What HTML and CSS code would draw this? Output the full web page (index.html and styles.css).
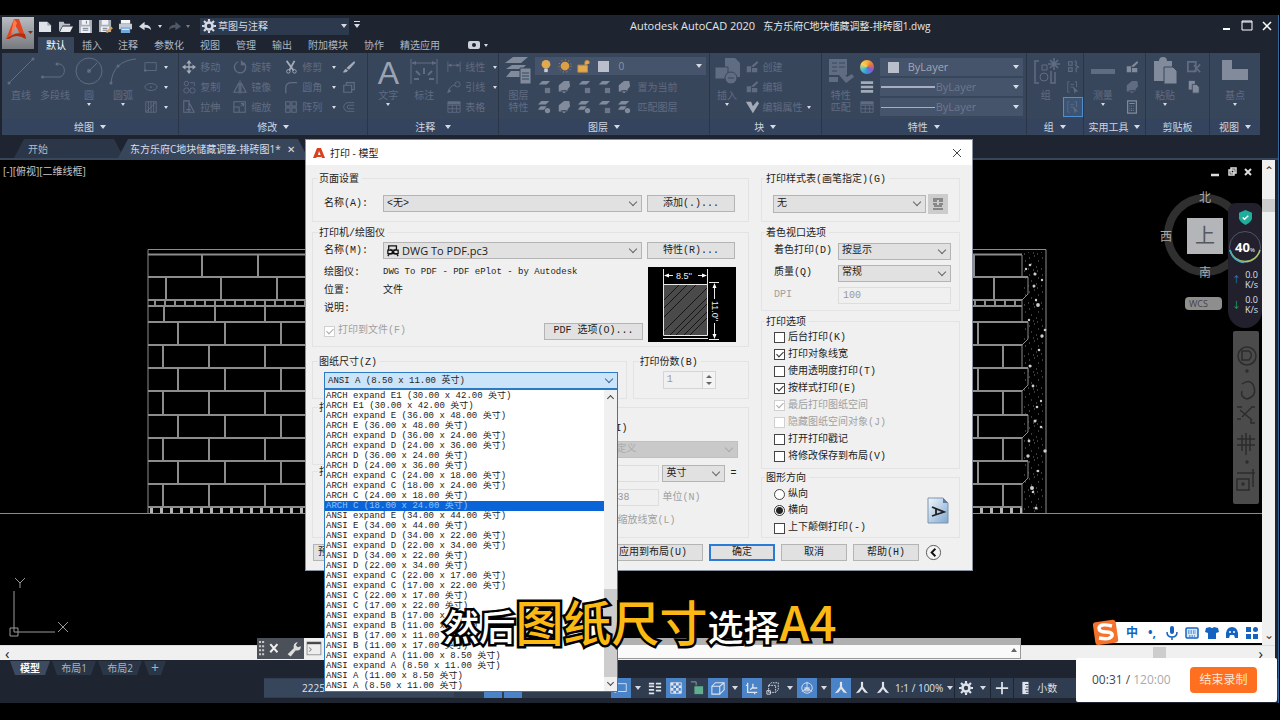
FILE: index.html
```html
<!DOCTYPE html>
<html lang="zh-CN">
<head>
<meta charset="utf-8">
<title>Autodesk AutoCAD 2020</title>
<link rel="stylesheet" href="styles.css">
</head>
<body>
<svg class="defs" aria-hidden="true">
  <symbol id="new" viewBox="0 0 16 14"><path d="M1 2h9l4 4v7H1z" fill="#dfe3ea"/><path d="M10 2v4h4" fill="#9aa3b2"/></symbol>
  <symbol id="open" viewBox="0 0 16 14"><path d="M1 13V2h5l1 2h6v2H5z" fill="#b9c0cc"/><path d="M5 7h11l-3 6H2z" fill="#e6e9ee"/></symbol>
  <symbol id="save" viewBox="0 0 16 14"><path d="M1 0h14v14H1z" fill="#a8afbb"/><path d="M4 0h8v5H4zM3 7h10v7H3z" fill="#eef0f3"/><path d="M5 9h6M5 11h6M9 1v3" stroke="#6b7484"/></symbol>
  <symbol id="saveas" viewBox="0 0 16 14"><path d="M1 0h13v13H1z" fill="#a8afbb"/><path d="M4 0h7v5H4zM3 7h9v6H3z" fill="#eef0f3"/><path d="M5 9h5M5 11h5" stroke="#6b7484"/><path d="M8 13l6-6 2 2-6 5z" fill="#e3a14c"/></symbol>
  <symbol id="print" viewBox="0 0 16 14"><path d="M3 0h10v4H3z" fill="#f4f6f8"/><path d="M1 4h14v6H1z" fill="#c3cad5"/><path d="M3 8h10v6H3z" fill="#6ea8dc"/><path d="M4 10h8" stroke="#fff"/></symbol>
  <symbol id="undo" viewBox="0 0 16 14"><path d="M1 7l6-5v3q7 0 7 6q-2-3-7-3v3z" fill="currentColor"/></symbol>
  <symbol id="gear" viewBox="0 0 16 16"><circle cx="8" cy="8" r="4" fill="none" stroke="currentColor" stroke-width="3"/><path d="M8 0v3M8 13v3M0 8h3M13 8h3M2.300 2.300l2 2M11.700 11.700l2 2M13.700 2.300l-2 2M4.300 11.700l-2 2" stroke="currentColor" stroke-width="2.500"/></symbol>
  <symbol id="line" viewBox="0 0 28 28"><path d="M2 26L26 2" stroke="currentColor" fill="none"/><circle cx="2" cy="26" r="1.500" fill="currentColor"/><circle cx="26" cy="2" r="1.500" fill="currentColor"/></symbol>
  <symbol id="pline" viewBox="0 0 28 28"><path d="M1 20h18a7 7 0 000-13h-4" stroke="currentColor" fill="none"/><circle cx="1.500" cy="20" r="1.500" fill="currentColor"/><circle cx="16" cy="7" r="1.500" fill="currentColor"/></symbol>
  <symbol id="circle" viewBox="0 0 28 28"><circle cx="14" cy="14" r="13" stroke="currentColor" fill="none"/><path d="M14 14l8-8" stroke="currentColor"/><circle cx="14" cy="14" r="2" fill="currentColor"/></symbol>
  <symbol id="arc" viewBox="0 0 28 28"><path d="M2 26Q4 4 27 2" stroke="currentColor" fill="none"/><circle cx="2" cy="26" r="1.500" fill="currentColor"/><circle cx="9" cy="9" r="1.500" fill="currentColor"/></symbol>
  <symbol id="rect" viewBox="0 0 16 16"><path d="M1 3h13v9H1z" fill="none" stroke="currentColor"/><circle cx="1.500" cy="12" r="1.500" fill="currentColor"/></symbol>
  <symbol id="ellipse" viewBox="0 0 16 16"><ellipse cx="8" cy="8" rx="7" ry="4" fill="none" stroke="currentColor"/><circle cx="8" cy="8" r="1" fill="currentColor"/></symbol>
  <symbol id="hatch" viewBox="0 0 16 16"><path d="M2 2h12v12H2zM5 2v12M8 2v12M11 2v12M2 14L14 2" fill="none" stroke="currentColor"/></symbol>
  <symbol id="move" viewBox="0 0 16 16"><path d="M8 2v12M2 8h12" stroke="currentColor" stroke-width="1.500"/><path d="M8 0l3 4H5zM8 16l3-4H5zM0 8l4-3v6zM16 8l-4-3v6z" fill="currentColor"/></symbol>
  <symbol id="copy" viewBox="0 0 16 16"><circle cx="5" cy="4" r="2.500" fill="none" stroke="currentColor"/><circle cx="5" cy="12" r="3" fill="none" stroke="currentColor"/><circle cx="12" cy="12" r="3" fill="none" stroke="currentColor"/><path d="M9 3h5v4" fill="none" stroke="currentColor"/></symbol>
  <symbol id="stretch" viewBox="0 0 16 16"><path d="M2 1h6v13H2zM8 3l6 11H2M5 11h5" fill="none" stroke="currentColor" stroke-width="1.200"/></symbol>
  <symbol id="rotate" viewBox="0 0 16 16"><path d="M12 3a6.500 6.500 0 11-6-1" fill="none" stroke="currentColor" stroke-width="1.500"/><path d="M9 0v6h6z" fill="currentColor"/></symbol>
  <symbol id="mirror" viewBox="0 0 16 16"><path d="M7 3v11H1zM9 3v11h6z" fill="none" stroke="currentColor" stroke-width="1.300"/><path d="M8 0v16" stroke="currentColor"/></symbol>
  <symbol id="scale" viewBox="0 0 16 16"><path d="M1 2h13v12H1zM1 8h6v6M9 7l3-3M9 4h3v3" fill="none" stroke="currentColor" stroke-width="1.200"/></symbol>
  <symbol id="trim" viewBox="0 0 16 16"><path d="M3 1l8 11M12 1L6 12" stroke="currentColor" stroke-width="2"/><circle cx="5" cy="13" r="2" fill="none" stroke="currentColor"/><circle cx="12" cy="13" r="2" fill="none" stroke="currentColor"/></symbol>
  <symbol id="fillet" viewBox="0 0 16 16"><path d="M2 15V9q0-6 7-6h6" fill="none" stroke="currentColor" stroke-width="1.500"/></symbol>
  <symbol id="array" viewBox="0 0 16 16"><path d="M2 2h5v5H2zM9 2h5v5H9zM2 9h5v5H2zM9 9h5v5H9z" fill="none" stroke="currentColor" stroke-width="1.300"/></symbol>
  <symbol id="brush" viewBox="0 0 16 16"><path d="M14 1l1 2-7 8-3-2zM4 10l3 2q-2 3-6 2z" fill="currentColor"/></symbol>
  <symbol id="box" viewBox="0 0 16 16"><path d="M2 6h9v8H2zM5 6V3h9v8h-3" fill="none" stroke="currentColor" stroke-width="1.300"/></symbol>
  <symbol id="offset" viewBox="0 0 16 16"><path d="M14 3H7a5 5 0 000 10h7M14 6H8a2 2 0 000 4h6" fill="none" stroke="currentColor"/></symbol>
  <symbol id="dim" viewBox="0 0 28 28"><path d="M1 2v25M27 2v25M2 6h24" stroke="currentColor" fill="none"/><path d="M2 6l4-2v4zM26 6l-4-2v4z" fill="currentColor"/><path d="M14 11v6M6 14l4 4M22 14l-4 4M4 22h5M19 22h5" stroke="currentColor" stroke-width="2"/></symbol>
  <symbol id="lin" viewBox="0 0 16 16"><path d="M1 2v12M15 2v12M2 6h12" stroke="currentColor" fill="none"/><path d="M1 6l4-2v4zM15 6l-4-2v4z" fill="currentColor"/></symbol>
  <symbol id="leader" viewBox="0 0 16 16"><path d="M2 14q1-8 7-8" fill="none" stroke="currentColor"/><circle cx="12" cy="5" r="3" fill="none" stroke="currentColor"/><path d="M0 15l2-5 3 3z" fill="currentColor"/></symbol>
  <symbol id="table" viewBox="0 0 16 16"><path d="M1 2h14v12H1zM1 6h14M1 10h14M6 6v8M11 6v8" fill="none" stroke="currentColor"/><path d="M1 2h14v3H1z" fill="currentColor"/></symbol>
  <symbol id="layers" viewBox="0 0 28 28"><path d="M9 0h15l-7 6H1zM8 8h14l-4 4H2zM7 14h9v6H2z" fill="currentColor"/><path d="M16 11h11v16H16z" fill="currentColor" stroke="#38465c"/><path d="M18 16h7M18 19h7M18 22h7" stroke="#38465c"/></symbol>
  <symbol id="layer" viewBox="0 0 16 16"><path d="M5 1h9l-4 4H1zM4 7h7l-3 4H1z" fill="currentColor"/><circle cx="12" cy="12" r="3" fill="currentColor"/></symbol>
  <symbol id="layer2" viewBox="0 0 16 16"><path d="M6 1h9l-4 4H2z" fill="currentColor"/><path d="M9 9h6v6H9z" fill="currentColor" opacity=".7"/></symbol>
  <symbol id="layer3" viewBox="0 0 16 16"><path d="M2 6l6-5h6l1 6-5 6H2zM4 12l4 3 5-4" fill="currentColor"/></symbol>
  <symbol id="insert" viewBox="0 0 28 28"><path d="M12 1h10l5 5v14H12z" fill="currentColor"/><path d="M2 10h13v12H2z" fill="currentColor" stroke="#38465c"/><circle cx="18" cy="21" r="6" fill="currentColor" stroke="#38465c"/><path d="M15 21h6" stroke="#38465c"/></symbol>
  <symbol id="block" viewBox="0 0 16 16"><path d="M2 7h5v7H2zM8 9h6v5H8z" fill="currentColor"/><path d="M7 7l7-6 1 2-5 5z" fill="currentColor"/></symbol>
  <symbol id="attr" viewBox="0 0 16 16"><path d="M1 2h6l2 5 5-6 2 3-7 11z" fill="currentColor"/></symbol>
  <symbol id="match" viewBox="0 0 28 28"><path d="M2 2h18v16H2z" fill="currentColor"/><path d="M5 6h5M5 10h5M5 14h5M12 6h6M12 10h6" stroke="#38465c"/><path d="M15 14l5 6 5-3 2 3-8 6-7-8zM2 20h9v5H2z" fill="currentColor"/></symbol>
  <symbol id="group" viewBox="0 0 28 28"><path d="M7 4H3v22h4M19 14v12h4V15" fill="none" stroke="currentColor" stroke-width="1.500"/><path d="M10 8h5v5h-5z" fill="none" stroke="currentColor"/><circle cx="12" cy="20" r="4" fill="none" stroke="currentColor"/><path d="M22 1v12M16 7h12M18 3l8 8M26 3l-8 8" stroke="currentColor" stroke-width="1.500"/></symbol>
  <symbol id="sgroup" viewBox="0 0 16 16"><path d="M3 2h4v4H3zM3 9h4v4H3zM10 1q3 1 1 5l3 2q-4 1-2 6" fill="none" stroke="currentColor" stroke-width="1.300"/></symbol>
  <symbol id="pick" viewBox="0 0 16 16"><path d="M4 2H2v12h2M10 2h2v6M5 5h4M5 8h3" fill="none" stroke="currentColor"/><path d="M8 7l6 6-3 0-1 3z" fill="currentColor"/></symbol>
  <symbol id="measure" viewBox="0 0 28 28"><path d="M2 12h24v5H2z" fill="currentColor"/></symbol>
  <symbol id="calc" viewBox="0 0 16 16"><path d="M3 1h10v14H3zM5 4h6" fill="none" stroke="currentColor" stroke-width="1.400"/><path d="M5 7h6M5 10h6M5 12h6" stroke="currentColor" stroke-dasharray="1 1"/></symbol>
  <symbol id="paste" viewBox="0 0 28 28"><path d="M3 4h5a4 4 0 018 0h5v20H3z" fill="currentColor"/><path d="M13 10h9l4 4v13H13z" fill="currentColor" stroke="#38465c"/></symbol>
  <symbol id="pages" viewBox="0 0 16 16"><path d="M2 1h7v10H2z" fill="currentColor"/><path d="M6 5h5l3 3v7H6z" fill="currentColor" stroke="#38465c"/></symbol>
  <symbol id="cut" viewBox="0 0 16 16"><path d="M1 2h9v11H1zM8 6l7 8M15 5l-8 9" fill="none" stroke="currentColor" stroke-width="2"/></symbol>
  <symbol id="base" viewBox="0 0 28 28"><path d="M1 3h10v9h16v11H1z" fill="currentColor"/></symbol>
  <symbol id="lines" viewBox="0 0 16 16"><path d="M1 3h14M1 8h14M1 13h14" stroke="currentColor" stroke-width="3"/></symbol>
  <symbol id="weights" viewBox="0 0 16 16"><path d="M1 3h6M1 6h6M1 10h6M1 14h6M9 3h6M9 7h6M9 11h6" stroke="currentColor" stroke-width="2"/></symbol>
  <symbol id="person" viewBox="0 0 16 16"><path d="M8 1v8" stroke="currentColor" stroke-width="2.500"/><path d="M8 5l7 9-4-1-3-4-3 4-4 1z" fill="currentColor"/></symbol>
  <symbol id="wcheck" viewBox="0 0 16 16"><path d="M2 2h12v12H2z" fill="none" stroke="currentColor"/><path d="M2 2h3v3H2zM8 2h3v3H8zM5 5h3v3H5zM11 5h3v3h-3zM2 8h3v3H2zM8 8h3v3H8zM5 11h3v3H5zM11 11h3v3h-3z" fill="currentColor"/></symbol>
  <symbol id="cube" viewBox="0 0 16 16"><path d="M1 6h9v9H1zM1 6l4-4h10v8l-5 5M10 6l5-4" fill="none" stroke="currentColor" stroke-width="1.200"/></symbol>
  <symbol id="dash" viewBox="0 0 16 16"><path d="M3 5h8v8H3zM3 5l3-3h8v8l-3 3" fill="none" stroke="currentColor" stroke-dasharray="2 1"/><path d="M1 11h4v4H1z" fill="none" stroke="currentColor"/></symbol>
  <symbol id="ucs" viewBox="0 0 16 16"><path d="M3 2v11h11M3 5h-2M11 13v2M6 10l3-3M9 3v5h5" fill="none" stroke="currentColor" stroke-width="1.500"/></symbol>
  <symbol id="globe" viewBox="0 0 16 16"><circle cx="8" cy="8" r="6" fill="none" stroke="currentColor"/><path d="M8 1v7l-6 4M8 8l6 4" fill="none" stroke="currentColor"/><path d="M5 7h6v5H5z" fill="currentColor" opacity=".7"/></symbol>
</svg>

<div class="app">
  <header class="head">
    <button class="logo" aria-label="应用程序菜单"><svg viewBox="0 0 32 32"><path d="M4 22L12 2h5l7 20-6-3-2-6-3-5-3 9z" fill="#e2461f"/><path d="M4 22q9-8 19-5l1 5q-10-6-17 0z" fill="#b52c11"/><path d="M12 2l3 4-4 9-2 2z" fill="#ff7b4e"/><path d="M26 14h5l-2.500 3z" fill="#8b2b25"/></svg></button>
    <div class="titlebar">
      <nav class="quick">
        <button aria-label="新建"><svg><use href="#new"/></svg></button>
        <button aria-label="打开"><svg><use href="#open"/></svg></button>
        <button aria-label="保存"><svg><use href="#save"/></svg></button>
        <button aria-label="另存为"><svg><use href="#saveas"/></svg></button>
        <button aria-label="打印"><svg><use href="#print"/></svg></button>
        <button aria-label="放弃"><svg><use href="#undo"/></svg></button><i class="tri"></i>
        <button aria-label="重做" class="redo"><svg><use href="#undo"/></svg></button><i class="tri dim"></i>
      </nav>
      <button class="workspace"><svg><use href="#gear"/></svg><span>草图与注释</span><i class="tri"></i></button>
      <i class="tri bar"></i>
      <h1>Autodesk AutoCAD 2020<span>东方乐府C地块储藏调整-排砖图1.dwg</span></h1>
      <div class="win"><button aria-label="最小化"><svg viewBox="0 0 12 12"><path d="M2 9h7" stroke="#fff" stroke-width="2"/></svg></button><button aria-label="最大化"><svg viewBox="0 0 12 12"><path d="M1 1h10v9H1zM1 2h10" fill="none" stroke="#fff"/></svg></button><button aria-label="关闭"><svg viewBox="0 0 12 12"><path d="M2 2l8 8M10 2l-8 8" stroke="#fff" stroke-width="1.500"/></svg></button></div>
    </div>
    <nav class="tabs">
      <button class="on">默认</button><button>插入</button><button>注释</button><button>参数化</button><button>视图</button><button>管理</button><button>输出</button><button>附加模块</button><button>协作</button><button>精选应用</button>
      <button class="cam" aria-label="录制"><svg viewBox="0 0 12 8"><rect width="12" height="8" rx="2" fill="#cdd2da"/><circle cx="6" cy="4" r="2" fill="#1e2530"/></svg><i class="tri"></i></button>
    </nav>
  </header>

  <div class="ribbon">
    <section class="panel draw">
      <div class="tools">
        <button class="big"><svg><use href="#line"/></svg>直线</button>
        <button class="big"><svg><use href="#pline"/></svg>多段线</button>
        <button class="big"><svg><use href="#circle"/></svg>圆<i class="tri"></i></button>
        <button class="big"><svg><use href="#arc"/></svg>圆弧<i class="tri"></i></button>
        <div class="col">
          <button><svg><use href="#rect"/></svg><i class="tri"></i></button>
          <button><svg><use href="#ellipse"/></svg><i class="tri"></i></button>
          <button><svg><use href="#hatch"/></svg><i class="tri"></i></button>
        </div>
      </div>
      <h2>绘图<i class="tri"></i></h2>
    </section>
    <section class="panel modify">
      <div class="tools">
        <div class="col"><button><svg class="lit"><use href="#move"/></svg>移动</button><button><svg><use href="#copy"/></svg>复制</button><button><svg><use href="#stretch"/></svg>拉伸</button></div>
        <div class="col"><button><svg><use href="#rotate"/></svg>旋转</button><button><svg><use href="#mirror"/></svg>镜像</button><button><svg><use href="#scale"/></svg>缩放</button></div>
        <div class="col wide"><button><svg class="lit"><use href="#trim"/></svg>修剪<i class="tri"></i></button><button><svg><use href="#fillet"/></svg>圆角<i class="tri"></i></button><button><svg><use href="#array"/></svg>阵列<i class="tri"></i></button></div>
        <div class="col last"><button><svg class="lit"><use href="#brush"/></svg></button><button><svg><use href="#box"/></svg></button><button><svg><use href="#offset"/></svg></button></div>
      </div>
      <h2>修改<i class="tri"></i></h2>
    </section>
    <section class="panel note">
      <div class="tools">
        <button class="big"><span class="bigA">A</span>文字<i class="tri"></i></button>
        <button class="big"><svg><use href="#dim"/></svg>标注</button>
        <div class="col"><button><svg><use href="#lin"/></svg>线性<i class="tri"></i></button><button><svg><use href="#leader"/></svg>引线<i class="tri"></i></button><button><svg><use href="#table"/></svg>表格</button></div>
      </div>
      <h2>注释<i class="tri"></i></h2>
    </section>
    <section class="panel lay">
      <div class="tools">
        <button class="big"><svg class="mid"><use href="#layers"/></svg>图层<br>特性</button>
        <div class="col grow">
          <button class="drop"><svg viewBox="0 0 16 16"><circle cx="8" cy="6" r="5" fill="#e4a94d"/><path d="M6 11h4v4H6z" fill="#c9ced8"/></svg><svg viewBox="0 0 16 16"><circle cx="8" cy="8" r="5" fill="#dba044"/><circle cx="8" cy="8" r="7" fill="none" stroke="#dba044" stroke-dasharray="1 3"/></svg><svg viewBox="0 0 16 16"><path d="M1 7h11v8H1zM9 7V3a3 3 0 015 0v2" fill="#e4a94d" stroke="#b98b4b"/></svg><span class="sw"></span>0<i class="tri"></i></button>
          <div class="line"><svg class="mid"><use href="#layer2"/></svg><svg class="mid"><use href="#layer3"/></svg><svg class="mid"><use href="#layer2"/></svg><svg class="mid"><use href="#layer2"/></svg><svg class="mid"><use href="#layer3"/></svg><button>置为当前</button></div>
          <div class="line"><svg class="mid"><use href="#layer"/></svg><svg class="mid"><use href="#layer3"/></svg><svg class="mid"><use href="#layer"/></svg><svg class="mid"><use href="#layer2"/></svg><svg class="mid"><use href="#layer"/></svg><button>匹配图层</button></div>
        </div>
      </div>
      <h2>图层<i class="tri"></i></h2>
    </section>
    <section class="panel blk">
      <div class="tools">
        <button class="big"><svg><use href="#insert"/></svg>插入<i class="tri"></i></button>
        <div class="col"><button><svg><use href="#block"/></svg>创建</button><button><svg><use href="#block"/></svg>编辑</button><button><svg class="lit"><use href="#attr"/></svg>编辑属性<i class="tri"></i></button></div>
      </div>
      <h2>块<i class="tri"></i></h2>
    </section>
    <section class="panel prop">
      <div class="tools">
        <button class="big"><svg><use href="#match"/></svg>特性<br>匹配</button>
        <div class="col grow">
          <div class="line"><span class="wheel"></span><button class="drop first"><span class="sw"></span>ByLayer<i class="tri"></i></button></div>
          <div class="line"><svg class="lit"><use href="#lines"/></svg><button class="drop"><hr>ByLayer<i class="tri"></i></button></div>
          <div class="line"><svg><use href="#table"/></svg><button class="drop"><hr class="thin">ByLayer<i class="tri"></i></button></div>
        </div>
      </div>
      <h2>特性<i class="tri"></i></h2>
    </section>
    <section class="panel grp">
      <div class="tools">
        <button class="big"><svg><use href="#group"/></svg>组</button>
        <div class="col"><button><svg><use href="#sgroup"/></svg></button><button><svg><use href="#pick"/></svg></button><button class="sel"><svg><use href="#pick"/></svg></button></div>
      </div>
      <h2>组<i class="tri"></i></h2>
    </section>
    <section class="panel util">
      <div class="tools">
        <button class="big"><svg><use href="#measure"/></svg>测量<i class="tri"></i></button>
        <div class="col"><button><svg class="mid"><use href="#block"/></svg></button><button><svg><use href="#layer3"/></svg></button><button><svg class="mid"><use href="#calc"/></svg></button></div>
      </div>
      <h2>实用工具<i class="tri"></i></h2>
    </section>
    <section class="panel clip">
      <div class="tools">
        <button class="big"><svg class="mid"><use href="#paste"/></svg>粘贴<i class="tri"></i></button>
        <div class="col"><button><svg><use href="#cut"/></svg></button><button><svg class="mid"><use href="#pages"/></svg></button></div>
      </div>
      <h2>剪贴板</h2>
    </section>
    <section class="panel view">
      <div class="tools"><button class="big"><svg class="mid"><use href="#base"/></svg>基点<i class="tri"></i></button></div>
      <h2>视图<i class="tri"></i></h2>
    </section>
  </div>

  <nav class="docs"><button class="doc">开始</button><button class="doc active">东方乐府C地块储藏调整-排砖图1*<span>✕</span></button></nav>

  <div class="work">
    <main class="canvas">
      <svg class="drawing" viewBox="0 160 1262 485" preserveAspectRatio="xMinYMin slice" aria-hidden="true">
        <defs>
          <pattern id="grain" width="13" height="17" patternUnits="userSpaceOnUse"><path d="M2 3h1M7 1h1M11 6h1M4 9h1M9 12h1M1 14h1M6 15h1M10 16h1" stroke="#777"/></pattern>
        </defs>
        <g fill="none" stroke="#8c8c8c" stroke-width="1">
          <path d="M0 513.500h1262M148 513V249.500h898V513"/>
          <g stroke-width="2"><path d="M148 254.500h874M148 277h880M148 300h874M148 306h874M148 322h880M148 345h874M148 368h880M148 391h874M148 415h880M148 438h874M148 461h880M148 484h874M148 507h874"/>
          <path d="M202 255v22M258 255v22M166 277v23M221 277v23M277 277v23M164 306v16M215 306v16M265 306v16"/>
          <path d="M178 322v23M225 322v23M281 322v23M163 345v23M209 345v23M265 345v23M178 368v23M225 368v23M281 368v23M163 391v24M209 391v24M265 391v24M178 415v23M225 415v23M281 415v23M163 438v23M209 438v23M265 438v23M178 461v23M225 461v23M281 461v23M163 484v23M209 484v23M265 484v23"/>
          <path d="M974 255v22M994 277v23M972 306v16M978 322v23M1003 345v23M978 368v23M1003 391v24M978 415v23M1003 438v23M978 461v23M1003 484v23"/></g>
          <path d="M1022 255v22h6v17l-6 6v22h6v17l-6 6v23h6v17l-6 6v24h6v17l-6 6v23h6v17l-6 6v29"/>
          <path d="M154 303h868" stroke-width="6" stroke-dasharray="2 8"/>
          <path d="M150 510.500h872" stroke-width="5" stroke-dasharray="3 7" stroke="#b5b5b5"/>
        </g>
        <path d="M1024 252h20v260h-20z" fill="url(#grain)"/>
        <g fill="#ccc"><circle cx="1030" cy="265" r="1.300"/><circle cx="1026" cy="269" r="1.200"/><circle cx="1035" cy="274" r="1.600"/><circle cx="1042" cy="280" r="1.200"/><circle cx="1034" cy="286" r="1.500"/><circle cx="1036" cy="300" r="1.200"/><circle cx="1038" cy="305" r="1.900"/><circle cx="1029" cy="320" r="1.200"/><circle cx="1042" cy="336" r="1.700"/><circle cx="1045" cy="330" r="1.300"/><circle cx="1039" cy="350" r="1.300"/><circle cx="1030" cy="366" r="1.500"/><circle cx="1033" cy="386" r="1.400"/><circle cx="1041" cy="401" r="1.200"/><circle cx="1037" cy="407" r="1.300"/><circle cx="1035" cy="421" r="1.500"/><circle cx="1041" cy="427" r="1.300"/><circle cx="1029" cy="441" r="1.400"/><circle cx="1028" cy="456" r="1.700"/><circle cx="1045" cy="451" r="1.700"/><circle cx="1038" cy="471" r="1.300"/><circle cx="1032" cy="488" r="2"/><circle cx="1033" cy="492" r="1.300"/><circle cx="1036" cy="508" r="1.500"/></g>
        <g fill="none" stroke="#9a9a9a"><path d="M14 591v41h41M10 628h8v8h-8zM15 578l5 5 5-5M20 583v5M58 622l10 10M68 622l-10 10"/></g>
      </svg>
      <p class="vp">[-][俯视][二维线框]</p>
      <div class="docwin"><svg viewBox="0 0 44 12"><path d="M1 9h8" stroke="#ddd" stroke-width="2.500"/><path d="M21 2h5v5h-5zM19 4h5v5h-5z" fill="none" stroke="#ddd" stroke-width="1.500"/><path d="M35 3l6 6M41 3l-6 6" stroke="#ddd" stroke-width="2"/></svg></div>
      <div class="compass"><b class="n">北</b><b class="w">西</b><b class="s">南</b><button class="face">上</button></div>
      <button class="wcs">WCS</button>
      <div class="navbar"><svg viewBox="0 0 26 174"><g fill="none" stroke="#2c2c2c" stroke-width="1.500"><circle cx="14" cy="25" r="9"/><path d="M9 20h7q5 4 0 9H9z"/><circle cx="14" cy="40" r="1"/><path d="M9 53q9-6 12 3t-7 12q-7-2-5-8"/><path d="M4 76h5M18 76h4M7 79l12 10M19 76l-10 10M4 88h4M18 88v4h4"/><path d="M13 102v22M4 108h18M4 114h18M9 104v16M17 104v16"/><circle cx="14" cy="131" r="1"/><path d="M4 148h12v11H4zM4 142h18M20 138v18"/><circle cx="10" cy="153" r="1"/></g></svg></div>
      <aside class="monitor">
        <svg class="shield" viewBox="0 0 14 16"><path d="M7 0l7 3v6q-1 4-7 7q-6-3-7-7V3z" fill="#1fae9c"/><path d="M4 8l2 2 4-4" fill="none" stroke="#fff" stroke-width="1.500"/></svg>
        <div class="load">40<small>%</small><svg viewBox="0 0 34 34"><circle cx="17" cy="17" r="15.500" fill="none" stroke="#4d5565"/><path d="M2 20a15.500 15.500 0 0030 0" fill="none" stroke="#a8c86c" stroke-width="1.500"/><path d="M2 20a15.500 15.500 0 0014 12.500" fill="none" stroke="#45a6c0" stroke-width="1.500"/></svg></div>
        <p><i class="up">↑</i><span>0.0<br>K/s</span></p><p><i class="down">↓</i><span>0.0<br>K/s</span></p>
      </aside>
      <div class="ime"><svg class="sogou" viewBox="0 0 27 27"><rect x="2" y="2" width="23" height="23" rx="3" fill="#f4722b" transform="rotate(-8 13 13)"/><path d="M20 7Q8 4 7 9q0 4 7 4t6 4q-2 4-13 2" fill="none" stroke="#fff" stroke-width="3.500"/></svg>
        <b>中</b><b>•,</b>
        <svg viewBox="0 0 14 14"><rect x="5" y="0" width="4" height="8" rx="2" fill="#1463c0"/><path d="M2 6q0 5 5 5t5-5M7 11v3" fill="none" stroke="#1463c0" stroke-width="1.500"/></svg>
        <svg viewBox="0 0 14 14"><rect x="1" y="2" width="12" height="10" rx="1" fill="#d6e8fa" stroke="#1463c0" stroke-width="1.500"/><path d="M3 5h8M3 7h8M4 10h6" stroke="#1463c0" stroke-dasharray="1.500 1"/></svg>
        <svg viewBox="0 0 14 14"><path d="M1 2l4-1q2 2 4 0l4 1 1 4-3 1v6H3V7L0 6z" fill="#1463c0"/></svg>
        <svg viewBox="0 0 14 14"><path d="M1 12V7q1-6 6-6t6 6v5h-3l-1-3H5l-1 3z" fill="#1463c0"/><circle cx="5" cy="6" r="1" fill="#fff"/><circle cx="9" cy="6" r="1" fill="#fff"/></svg>
        <svg viewBox="0 0 14 14"><path d="M1 1h5v5H1zM1 8h5v5H1zM8 8h5v5H8z" fill="#1463c0"/><circle cx="10.500" cy="3.500" r="2.500" fill="#1463c0"/></svg>
      </div>
    </main>
    <div class="vscroll"><i>⌃</i><span></span><i class="dn">⌄</i></div>
  </div>
  <div class="hscroll"><i>‹</i><span></span><i>›</i></div>
  <div class="command"><div class="grip"><svg viewBox="0 0 46 20"><path d="M3 3v15M6 3v15" stroke="#c9c9c9" stroke-dasharray="2 2" stroke-width="2"/><path d="M13 6l7 8M20 6l-7 8" stroke="#eee" stroke-width="2"/><path d="M30 16l6-6q-1-5 4-6l-2 3 2 2 3-1q0 5-5 4l-5 6z" fill="#ddd"/></svg></div><div class="cmdicon"><svg viewBox="0 0 16 14"><path d="M1 1h13v12H1z" fill="#eee" stroke="#999"/><path d="M1 2h13" stroke="#444" stroke-width="2"/><path d="M3 6l2 2-2 2" fill="none" stroke="#999"/></svg></div><input aria-label="命令行"><span class="tri upt"></span></div>
  <nav class="layouts"><button class="on">模型</button><button>布局1</button><button>布局2</button><button class="plus">+</button></nav>
  <footer class="status">
    <div class="coord">2225</div>
    <div class="hid"><i></i><i></i></div>
    <button class="blue"><svg><use href="#rect"/></svg></button><i class="tri"></i>
    <button><svg><use href="#weights"/></svg></button>
    <button class="blue"><svg><use href="#wcheck"/></svg></button>
    <button><svg viewBox="0 0 16 16"><path d="M1 1h6v4" fill="none" stroke="#9aa"/><path d="M5 6h10v9H5z" fill="#5fae8d"/></svg></button>
    <button class="blue"><svg><use href="#cube"/></svg></button><i class="tri"></i>
    <button class="blue"><svg><use href="#ucs"/></svg></button>
    <button><svg><use href="#dash"/></svg></button><i class="tri"></i>
    <button class="blue"><svg><use href="#globe"/></svg></button><i class="tri"></i>
    <button class="blue"><svg><use href="#person"/></svg></button>
    <button><svg><use href="#person"/></svg></button>
    <button><svg><use href="#person"/></svg></button>
    <button class="txt">1:1 / 100%<i class="tri"></i></button>
    <button class="sep"><svg><use href="#gear"/></svg></button><i class="tri"></i>
    <button class="sep"><svg viewBox="0 0 16 16"><path d="M8 1v14M1 8h14" stroke="#dfe3ea" stroke-width="2"/></svg></button>
    <button class="sep"><svg viewBox="0 0 16 16"><path d="M5 1h7v14H5z" fill="#dfe3ea"/><path d="M8 4h4M9 7h3M8 10h4M9 13h3" stroke="#38465c"/></svg></button>
    <button class="txt">小数</button>
  </footer>

  <form class="dialog" role="dialog" aria-labelledby="dt" onsubmit="return false">
    <div class="dtitle"><svg viewBox="0 0 12 12"><path d="M0 11L4 1h4l4 10H9L8 9 6 4 5 8h3v2H4l-1 1z" fill="#d8431f"/></svg><span id="dt">打印 - 模型</span><button type="button" aria-label="关闭"><svg viewBox="0 0 12 12"><path d="M2 2l8 8M10 2l-8 8" stroke="#444"/></svg></button></div>
    <div class="dbody">
      <div class="left">
        <fieldset class="page"><legend>页面设置</legend>
          <div class="pair"><label for="n1">名称(A):</label><span class="combo"><select id="n1"><option>&lt;无&gt;</option></select></span><button class="btn side">添加(.)...</button></div>
        </fieldset>
        <fieldset class="printer"><legend>打印机/绘图仪</legend>
          <div class="pair"><label for="n2">名称(M):</label><span class="combo pc3"><svg viewBox="0 0 14 14"><path d="M2 1h9v5H2zM1 6h12v4H1zM3 10l-2 3M11 10l2 3" fill="none" stroke="#111" stroke-width="1.500"/><path d="M4 5l6 6M10 5l-6 6" stroke="#111" stroke-width="1.500"/></svg><select id="n2"><option>DWG To PDF.pc3</option></select></span><button class="btn side">特性(R)...</button></div>
          <div class="info">
            <dl><dt>绘图仪:</dt><dd class="mono">DWG To PDF - PDF ePlot - by Autodesk</dd><dt>位置:</dt><dd>文件</dd><dt>说明:</dt><dd></dd></dl>
            <div class="tofile"><label class="off"><input type="checkbox" checked disabled>打印到文件(F)</label><button class="btn pdf">PDF 选项(O)...</button></div>
            <svg class="preview" viewBox="0 0 88 75"><path fill="#000" d="M0 0h88v75H0z"/><path d="M16 18h43v50H16z" fill="#4a4a4a"/><path d="M16 33l15-15M16 50l32-32M16 64l43-43M28 68l31-31M42 68l17-17M16 41l23-23M22 68l37-37M36 68l23-23" stroke="#151515"/><path d="M15.500 2v66.500h44V2M15 17.500h44M15 71.500h45M17 8.500h8M50 8.500h8M61 15.500h10M61 72.500h10M66.500 17v15M66.500 56v15" stroke="#e8e8e8" fill="none"/><path d="M16 8.500l5-2v4zM59 8.500l-5-2v4zM66.500 16l-2 5h4zM66.500 72l-2-5h4z" fill="#fff"/><text x="28" y="12" class="pt">8.5''</text><text transform="translate(64 34) rotate(90)" class="pt">11.0''</text></svg>
          </div>
        </fieldset>
        <div class="row2">
          <fieldset class="paper"><legend>图纸尺寸(Z)</legend>
            <div class="paperbox"><span class="combo hot"><select aria-label="图纸尺寸" class="mono"><option>ANSI A (8.50 x 11.00 英寸)</option></select></span>
              <div class="popup"><ul role="listbox" aria-label="图纸尺寸列表">
<li role="option">ARCH expand E1 (30.00 x 42.00 英寸)</li><li role="option">ARCH E1 (30.00 x 42.00 英寸)</li><li role="option">ARCH expand E (36.00 x 48.00 英寸)</li><li role="option">ARCH E (36.00 x 48.00 英寸)</li><li role="option">ARCH expand D (36.00 x 24.00 英寸)</li><li role="option">ARCH expand D (24.00 x 36.00 英寸)</li><li role="option">ARCH D (36.00 x 24.00 英寸)</li><li role="option">ARCH D (24.00 x 36.00 英寸)</li><li role="option">ARCH expand C (24.00 x 18.00 英寸)</li><li role="option">ARCH expand C (18.00 x 24.00 英寸)</li><li role="option">ARCH C (24.00 x 18.00 英寸)</li><li role="option" aria-selected="true">ARCH C (18.00 x 24.00 英寸)</li><li role="option">ANSI expand E (34.00 x 44.00 英寸)</li><li role="option">ANSI E (34.00 x 44.00 英寸)</li><li role="option">ANSI expand D (34.00 x 22.00 英寸)</li><li role="option">ANSI expand D (22.00 x 34.00 英寸)</li><li role="option">ANSI D (34.00 x 22.00 英寸)</li><li role="option">ANSI D (22.00 x 34.00 英寸)</li><li role="option">ANSI expand C (22.00 x 17.00 英寸)</li><li role="option">ANSI expand C (17.00 x 22.00 英寸)</li><li role="option">ANSI C (22.00 x 17.00 英寸)</li><li role="option">ANSI C (17.00 x 22.00 英寸)</li><li role="option">ANSI expand B (17.00 x 11.00 英寸)</li><li role="option">ANSI expand B (11.00 x 17.00 英寸)</li><li role="option">ANSI B (17.00 x 11.00 英寸)</li><li role="option">ANSI B (11.00 x 17.00 英寸)</li><li role="option">ANSI expand A (11.00 x 8.50 英寸)</li><li role="option">ANSI expand A (8.50 x 11.00 英寸)</li><li role="option">ANSI A (11.00 x 8.50 英寸)</li><li role="option">ANSI A (8.50 x 11.00 英寸)</li></ul><div class="pscroll"><i class="chev upc"></i><span></span><i class="chev"></i></div></div>
            </div>
          </fieldset>
          <fieldset class="copies"><legend>打印份数(B)</legend><div class="spin"><input aria-label="打印份数" value="1" disabled><span><i class="tri upt"></i><i class="tri"></i></span></div></fieldset>
        </div>
        <div class="row3">
          <div class="stack"><fieldset><legend>打印区域</legend></fieldset><fieldset><legend>打印偏移</legend></fieldset></div>
          <fieldset class="ratio"><legend>打印比例</legend>
            <label>布满图纸(I)</label>
            <div class="rr"><span class="combo off"><select aria-label="比例" disabled><option>自定义</option></select></span></div>
            <div class="rr"><input class="field" aria-label="英寸值" disabled><span class="combo unit"><select aria-label="单位"><option>英寸</option></select></span>=</div>
            <div class="rr off"><input class="field" aria-label="单位值" value="38" disabled><span>单位(N)</span></div>
            <label class="off lw">缩放线宽(L)</label>
          </fieldset>
        </div>
      </div>
      <div class="right">
        <fieldset class="page"><legend>打印样式表(画笔指定)(G)</legend><div class="pair"><span class="combo"><select aria-label="打印样式表"><option>无</option></select></span><button class="edit" aria-label="编辑"><svg viewBox="0 0 12 12"><path d="M1 1h10M1 3h4M7 3h4M1 6h4M7 6h4M2 8h8M1 11h10" stroke="#444"/></svg></button></div></fieldset>
        <fieldset class="shade"><legend>着色视口选项</legend>
          <div class="f"><label for="s1">着色打印(D)</label><span class="combo"><select id="s1"><option>按显示</option></select></span></div>
          <div class="f"><label for="s2">质量(Q)</label><span class="combo"><select id="s2"><option>常规</option></select></span></div>
          <div class="f off"><label for="s3">DPI</label><input id="s3" class="field" value="100" disabled></div>
        </fieldset>
        <fieldset class="opts"><legend>打印选项</legend>
          <label><input type="checkbox">后台打印(K)</label><label><input type="checkbox" checked>打印对象线宽</label><label><input type="checkbox">使用透明度打印(T)</label><label><input type="checkbox" checked>按样式打印(E)</label><label class="off"><input type="checkbox" checked disabled>最后打印图纸空间</label><label class="off"><input type="checkbox" disabled>隐藏图纸空间对象(J)</label><label><input type="checkbox">打开打印戳记</label><label><input type="checkbox">将修改保存到布局(V)</label>
        </fieldset>
        <fieldset class="orient"><legend>图形方向</legend><div><label><input type="radio" name="o">纵向</label><label><input type="radio" name="o" checked>横向</label><label><input type="checkbox">上下颠倒打印(-)</label></div>
          <svg viewBox="0 0 22 27"><defs><linearGradient id="pg" x2="1" y2="1"><stop stop-color="#f2f7fc"/><stop offset="1" stop-color="#7fa9d2"/></linearGradient></defs><path d="M1 1h15l5 5v20H1z" fill="url(#pg)" stroke="#7d95ad"/><path d="M16 1v5h5" fill="#5c7da0"/><path d="M5 10l12 5-12 4M9 11v7" fill="none" stroke="#222" stroke-width="1.800"/></svg></fieldset>
      </div>
    </div>
    <div class="dfoot"><button class="btn prev">预览(P)...</button><button class="btn apply">应用到布局(U)</button><button class="btn ok">确定</button><button class="btn">取消</button><button class="btn">帮助(H)</button><button class="less" aria-label="收起"><svg viewBox="0 0 18 18"><circle cx="9" cy="9" r="7.500" fill="#f4f4f4" stroke="#555"/><path d="M11 5L7 9l4 4" fill="none" stroke="#111" stroke-width="2"/></svg></button></div>
  </form>

  <aside class="recorder"><span>00:31 / <em>120:00</em></span><button>结束录制</button></aside>
</div>
<p class="caption"><span>然后</span><strong>图纸尺寸</strong><span>选择</span><strong>A4</strong></p>
</body>
</html>
```
FILE: styles.css
```css
* { box-sizing: border-box; }
body {
  margin: 0; height: 100vh; padding: 15px 0 17px; background: #000; overflow: hidden;
  font: 10px/12px "Open Sans", "Noto Sans CJK SC", sans-serif; color: #d5dae3;
}
button, input, select { font: inherit; color: inherit; margin: 0; padding: 0; border: 0; background: none; border-radius: 0; }
h1, h2, p, ul, dl, dd { margin: 0; padding: 0; font-weight: 400; }
i, em { font-style: normal; }
.defs { position: absolute; width: 0; height: 0; }
.app { position: relative; display: flex; flex-direction: column; height: 100%; margin-right: 1px; border-right: 1px solid #35679f; background: #1e2530; padding-bottom: 5px; }
.tri { display: inline-block; flex: none; width: 0; height: 0; border: 3px solid transparent; border-top: 4px solid #d5dae3; border-bottom: 0; }
.tri.upt { border-top: 0; border-bottom: 4px solid #666; }

/* title and ribbon tabs */
.head { display: grid; grid-template: 22px 16px / 38px 1fr; }
.logo { grid-row: 1 / 3; width: 32px; height: 32px; margin: 2px; background: linear-gradient(#b9bcc0, #76797e); }
.logo svg { display: block; }
.titlebar { display: flex; align-items: center; }
.quick { display: flex; align-items: center; gap: 4px; width: 162px; }
.quick button { width: 16px; height: 14px; }
.quick svg { display: block; width: 15px; height: 13px; }
.quick .tri { border-width: 2px; border-top-width: 3px; border-bottom: 0; }
.redo { transform: scaleX(-1); color: #4d586a; }
.tri.dim { opacity: .5; }
.workspace { display: flex; align-items: center; gap: 2px; width: 149px; height: 17px; padding: 0 2px; background: #2d394d; }
.workspace svg { width: 14px; height: 14px; }
.workspace span { flex: 1; text-align: left; }
.tri.bar { margin-left: 5px; position: relative; }
.tri.bar::before { content: ""; position: absolute; left: -3px; top: -7px; width: 6px; height: 1px; background: #d5dae3; }
h1 { margin-left: 270px; font-size: 11px; line-height: 16px; flex: 1; white-space: nowrap; color: #e2e5ea; }
h1 span { margin-left: 8px; font-size: 10px; }
.win { display: flex; gap: 8px; padding-right: 5px; }
.win button, .win svg { display: block; width: 12px; height: 12px; }
.tabs { display: flex; }
.tabs button { padding: 0 8px; color: #aeb6c3; height: 16px; line-height: 14px; }
.tabs .on { background: #38465c; color: #fff; }
.cam { display: flex; align-items: center; gap: 4px; }
.tabs .cam { margin-left: 12px; }
.cam svg { width: 12px; height: 8px; }
.cam .tri { border-width: 2px; border-top-width: 3px; border-bottom: 0; }

/* ribbon */
.ribbon { display: flex; gap: 1px; height: 82px; margin: 0 18px 4px 2px; background: #2a3548; }
.panel { display: flex; flex-direction: column; background: #38465c; overflow: hidden; min-width: 0; color: #606c81; }
.tools { display: flex; flex: 1; padding: 4px 0 0 2px; }
.panel h2 { display: flex; justify-content: center; align-items: center; gap: 6px; height: 15px; margin-bottom: 1px; color: #d0d5de; font-size: 10px; background: #35445e; }
.big { display: flex; flex-direction: column; align-items: center; flex: none; width: 34px; line-height: 12px; height: 58px; }
.big svg { width: 28px; height: 28px; flex: none; margin-bottom: 4px; }
.big .tri { margin-top: 2px; }
.big .tri, .col .tri { border-width: 2px; border-top-width: 3px; border-bottom-width: 0; }
.bigA { font: 32px/32px "Liberation Sans", sans-serif; height: 32px; color: #9aa3b1; }
.col { display: grid; grid-template-rows: 20px 20px 20px; grid-auto-columns: 1fr; align-content: start; flex: none; }
.col button { display: flex; align-items: center; gap: 4px; text-align: left; }
.col svg { width: 14px; height: 14px; flex: none; }
.col.grow { flex: 1; min-width: 0; }
.lit { color: #a3abb8; }
.mid { color: #818b9b; }
.draw { flex: 176 1 0; } .modify { flex: 188 1 0; } .note { flex: 130 1 0; } .lay { flex: 209 1 0; } .blk { flex: 111 1 0; }
.prop { flex: 204 1 0; } .grp { flex: 56 1 0; } .util { flex: 61 1 0; } .clip { flex: 63 1 0; } .view { flex: 50 1 0; }
.draw .col { margin-left: 4px; }
.draw .col button { gap: 6px; }
.modify .tools { padding-left: 3px; }
.modify .col { width: 51px; }
.modify .wide { width: 58px; }
.modify .last { width: 20px; }
.modify .wide .tri { margin-left: 6px; }
.note .col { margin-left: 5px; }
.note .tri { margin-left: 4px; }
.note .big .tri { margin-left: 0; }
.note .big { width: 36px; }
.col .drop { display: flex; align-items: center; gap: 5px; height: 18px; flex: 1; min-width: 0; background: #45536b; padding: 0 4px; color: #8d96a6; margin-right: 3px; }
.col .drop .tri { margin-left: auto; border-width: 3px; border-top-width: 4px; border-bottom-width: 0; }
.sw { width: 11px; height: 11px; background: #b9c0cc; margin: 0 4px 0 2px; }
.line { display: flex; align-items: center; gap: 6px; padding-left: 2px; }
.line .drop { color: #6d788c; font-size: 11px; gap: 1px; }
.line .first { color: #a0a8b6; gap: 5px; padding-left: 4px; }
.drop hr { width: 54px; margin: 0; border: 0; height: 2px; background: #a7afbd; }
.drop .thin { height: 1px; }
.prop .line .drop { padding-left: 1px; }
.prop .line .first { padding-left: 6px; }
.wheel { width: 14px; height: 14px; border-radius: 50%; background: conic-gradient(#f7b23c, #e8743b, #8a5bd0, #3c8ee0, #4ec3c9, #f3d35a, #f7b23c); }
.blk .tools { padding-left: 0; }
.blk .big { width: 35px; }
.sel { border: 1px solid #4f8fd0; background: #3b5474; }
.grp .col { width: 20px; }
.grp .col button { justify-content: center; }
.util .col, .clip .col { margin-left: 3px; }
.util .big, .clip .big { width: 38px; }
.util .tools, .clip .tools { padding-left: 0; }
.view .big { width: 46px; }

/* drawing tabs */
.docs { display: flex; height: 21px; border-bottom: 2px solid #38465c; background: #1e2530; }
.doc { height: 19px; background: #2b3749; clip-path: polygon(10px 0, calc(100% - 10px) 0, 100% 100%, 0 100%); width: 110px; margin-left: 14px; text-align: left; padding-left: 14px; color: #b4bcc8; }
.doc.active { width: 190px; margin-left: -6px; padding-left: 12px; background: #38465c; color: #d8dce4; white-space: nowrap; }
.doc span { margin-left: 6px; }

/* drawing area */
.work { flex: 1; display: flex; min-height: 0; padding-right: 3px; }
.canvas { flex: 1; position: relative; background: #000; }
.drawing { display: block; width: 100%; height: 100%; }
.vp { position: absolute; left: 3px; top: 5px; color: #c8c8c8; }
.docwin { position: absolute; right: 8px; top: 6px; width: 44px; }
.docwin svg { display: block; }
.compass { position: absolute; right: 16px; top: 34px; width: 82px; height: 82px; border: 8px solid #2f2f2f; border-radius: 50%; }
.compass b { position: absolute; font-weight: 400; font-size: 12px; line-height: 14px; color: #aaa; }
.n { left: 27px; top: -11px; } .s { left: 27px; bottom: -12px; } .w { left: -12px; top: 28px; }
.face { position: absolute; left: 15px; top: 16px; width: 36px; height: 36px; background: #b3b5b8; color: #55585c; font-size: 20px; line-height: 32px; }
.wcs { position: absolute; right: 40px; top: 137px; width: 37px; height: 13px; border-radius: 4px; background: #8e8e8e; color: #444; font-size: 9px; line-height: 11px; text-align: left; padding-left: 4px; }
.navbar { position: absolute; right: 3px; top: 171px; width: 26px; height: 173px; background: #4b4b4b; border-radius: 2px; }
.navbar svg { display: block; }
.monitor { position: absolute; right: 0; top: 43px; width: 34px; height: 125px; border-radius: 8px 8px 17px 17px; background: #22202d; text-align: center; }
.shield { width: 13px; height: 15px; margin-top: 7px; }
.load { position: relative; width: 34px; height: 34px; border-radius: 50%; background: #22202d; color: #fff; font: bold 13px/34px "Open Sans", sans-serif; margin: 3px 0; }
.load small { font-size: 6px; font-weight: 400; }
.load svg { position: absolute; inset: 0; }
.monitor p { display: flex; justify-content: center; align-items: center; gap: 4px; font-size: 9px; line-height: 10px; height: 25px; color: #dfe2e8; }
.up { color: #2b7bd0; } .down { color: #1fae7c; }
.ime { position: absolute; right: 0; bottom: 2px; display: flex; align-items: center; gap: 6px; height: 21px; padding-right: 3px; background: #fff; color: #1463c0; }
.ime svg { width: 14px; height: 14px; }
.ime b { font-size: 12px; width: 14px; text-align: center; white-space: nowrap; }
.ime .sogou { width: 27px; height: 27px; margin-left: -13px; }
.vscroll { display: flex; flex-direction: column; align-items: center; width: 13px; background: #f0f0f0; color: #444; font-size: 12px; }
.vscroll i { height: 39px; line-height: 22px; }
.vscroll span { width: 13px; height: 13px; background: #cdcdcd; }
.vscroll .dn { margin-top: auto; height: 12px; line-height: 4px; }
.hscroll { display: flex; align-items: center; height: 15px; margin-right: 3px; padding: 0 12px 0 5px; background: #f0f0f0; color: #222; font-size: 15px; border-top: 1px solid #ddd; }
.hscroll span { width: 13px; height: 12px; margin-left: auto; margin-right: 92px; background: #cdcdcd; }
.command { position: absolute; left: 257px; right: 257px; top: 623px; height: 21px; display: flex; background: #fafafa; border: 1px solid #999; border-top: 7px solid #b0b0b0; }
.grip { width: 47px; height: 21px; margin: -7px 0 0 -1px; background: #4c5059; }
.grip svg, .cmdicon svg { display: block; }
.cmdicon { width: 21px; padding: 3px 2px; height: 21px; margin-top: -7px; background: #f0f0f0; }
.command input { flex: 1; min-width: 0; }
.command .tri { margin: 3px; }

/* layout tabs and status bar */
.layouts { display: flex; height: 18px; padding: 1px 0 0 10px; }
.layouts button { height: 14px; width: 44px; margin-right: 2px; background: #2a3546; color: #aab2bf; clip-path: polygon(0 0, 100% 0, calc(100% - 5px) 100%, 5px 100%); }
.layouts .on { width: 40px; background: #3d4a60; color: #fff; font-weight: 700; }
.layouts .plus { width: 22px; font-size: 14px; }
.status { display: flex; align-items: center; height: 20px; margin-left: 264px; background: #303c50; color: #dfe3ea; }
.status .coord { flex: none; width: 190px; padding-left: 38px; height: 18px; line-height: 18px; background: #38465c; }
.status button { flex: none; width: 20px; height: 20px; margin-right: 1px; }
.status svg { display: block; width: 14px; height: 14px; margin: auto; }
.status .tri { margin: 0 4px 0 3px; }
.status .blue { background: #4a83c8; }
.status .txt { width: auto; padding: 0 0 0 1px; }
.status .txt .tri { margin: 0 0 2px 4px; }
.status .sep { border-left: 1px solid #1e2530; width: 22px; }
.hid { display: flex; gap: 2px; flex: none; width: 157px; padding-left: 30px; height: 20px; }
.hid i { width: 18px; background: #4a83c8; }

/* plot dialog */
.dialog { position: absolute; left: 0; right: 0; top: 125px; margin: 0 auto; width: 666px; background: #f0f0f0; color: #222; font: 10px/12px "Liberation Mono", "Noto Sans CJK SC", monospace; box-shadow: 0 0 0 1px #8892a0; }
.mono { font-size: 9px; }
.dtitle { display: flex; align-items: center; gap: 5px; height: 25px; padding: 0 9px 0 7px; background: #fff; font: 10px/12px "Open Sans", "Noto Sans CJK SC", sans-serif; }
.dtitle svg { display: block; width: 12px; height: 12px; }
.dtitle button { margin-left: auto; }
.dbody { display: flex; gap: 12px; padding: 7px 12px 0 6px; }
.left { flex: 437 1 0; min-width: 0; }
.right { flex: 199 1 0; min-width: 0; }
fieldset { margin: 0; min-width: 0; border: 1px solid #e3e3e3; padding: 0 11px; }
legend { height: 12px; line-height: 15px; padding: 0 3px 0 1px; margin-left: -6px; white-space: nowrap; }
.right legend { margin-left: -8px; }
.page { height: 50px; padding-top: 11px; margin-bottom: 4px; }
.pair { display: flex; align-items: center; height: 17px; }
.left .pair > label { width: 59px; }
.combo { position: relative; display: flex; align-items: center; flex: 1; min-width: 0; height: 17px; background: #e1e1e1; border: 1px solid #b4b4b4; }
.combo::after { content: ""; position: absolute; right: 5px; top: 3px; width: 5px; height: 5px; border: solid #666; border-width: 0 1px 1px 0; transform: rotate(45deg); pointer-events: none; }
select { appearance: none; width: 100%; padding: 0 3px; line-height: 14px; }
.btn { height: 17px; width: 66px; background: #e1e1e1; border: 1px solid #b4b4b4; white-space: nowrap; }
.btn.side { width: 88px; margin: 0 2px 0 5px; }
.printer { height: 121px; padding-top: 4px; margin-bottom: 8px; }
.pc3 svg { width: 12px; height: 12px; margin-left: 3px; flex: none; }
.pc3 select { font: 11px/14px "Open Sans", sans-serif; }
.info { display: grid; grid-template: 55px 26px / 1fr 88px; padding-top: 4px; margin-right: 1px; }
.info dl { display: grid; grid-template-columns: 59px 1fr; grid-auto-rows: 18px; line-height: 19px; }
.info .preview { grid-area: 1 / 2 / 3 / 3; width: 88px; height: 75px; margin-top: 4px; }
.pt { font: 9px "Liberation Sans", sans-serif; fill: #eee; }
.tofile { display: flex; align-items: center; justify-content: space-between; padding-right: 5px; }
.pdf { width: 99px; }
label { display: flex; align-items: center; white-space: nowrap; }
.off, .off select { color: #a0a0a0; }
input[type=checkbox], input[type=radio] { appearance: none; width: 11px; height: 11px; margin-right: 3px; border: 1px solid #444; background: #fff; flex: none; }
input[type=checkbox]:checked::before { content: ""; display: block; width: 3px; height: 6px; margin: 0 0 0 3px; border: solid #333; border-width: 0 1px 1px 0; transform: rotate(45deg); }
input[type=checkbox]:disabled { border-color: #d0d0d0; }
input[type=checkbox]:disabled::before { border-color: #aaa; }
input[type=radio] { border-radius: 50%; }
input[type=radio]:checked { border-color: #333; background: radial-gradient(#222 3px, #fff 4px); }
.row2 { display: flex; gap: 6px; height: 44px; margin-bottom: 2px; }
.paper { flex: none; width: 72%; padding: 5px 8px 0 11px; }
.copies { flex: 1; padding-top: 4px; }
.paperbox { position: relative; }
.hot { background: #cce4fa; border: 1px solid #2b7bc4; }
.hot::after { border-color: #3b6a94; }
.popup { position: absolute; z-index: 2; top: 100%; left: 0; right: 0; display: flex; background: #fff; border: 1px solid #2b7bc4; font-size: 9px; line-height: 10px; }
.popup ul { flex: 1; list-style: none; padding-top: 1px; }
.popup li { height: 10px; padding-left: 1px; white-space: nowrap; overflow: hidden; }
.popup li[aria-selected] { background: #0a64d8; color: #8fc4ff; }
.pscroll { display: flex; flex-direction: column; align-items: center; width: 13px; background: #f0f0f0; }
.pscroll span { margin-top: auto; width: 13px; height: 88px; background: #cdcdcd; }
.chev { width: 5px; height: 5px; margin: 3px 0 6px; border: solid #444; border-width: 0 1px 1px 0; transform: rotate(45deg); }
.chev.upc { transform: rotate(225deg); margin: 6px 0; }
.spin { display: flex; width: 53px; height: 18px; margin-left: 18px; border: 1px solid #d5d5d5; color: #999; }
.spin input { width: 38px; padding-left: 3px; }
.spin span { display: flex; flex-direction: column; justify-content: space-evenly; align-items: center; flex: 1; border-left: 1px solid #d5d5d5; background: #f4f4f4; }
.spin .tri { border-top-color: #666; border-width: 3px; border-bottom-width: 0; }
.spin .upt { border-width: 0 3px 3px; }
.row3 { display: flex; gap: 6px; height: 137px; }
.stack { flex: 1; display: grid; grid-template-rows: 64px 1fr; }
.ratio { flex: none; width: 42%; padding: 7px 10px 5px 3px; }
.ratio > label { height: 18px; }
.rr { display: flex; align-items: center; gap: 3px; height: 23px; margin: 0 0 1px 8px; }
.rr .combo.off { background: #c9c9c9; border-color: #c0c0c0; }
.rr .combo.off::after { border-color: #aaa; }
.rr .combo.off select { padding-left: 28px; }
.rr .unit { flex: none; width: 63px; margin-right: 2px; }
.field { width: 82px; height: 17px; border: 1px solid #ddd; padding-left: 4px; color: #999; }
.rr .field { flex: none; padding-left: 39px; }
.ratio .lw { padding-left: 48px; height: 22px; }
.edit { width: 20px; height: 20px; margin-left: 2px; background: #ccc; }
.edit svg { display: block; width: 12px; margin: auto; }
.right .page .combo { height: 18px; }
.shade { height: 85px; padding-top: 2px; margin-bottom: 4px; }
.f { display: flex; align-items: center; height: 22px; }
.f label { width: 65px; padding-left: 1px; }
.f .combo, .f .field { flex: 1; min-width: 0; }
.shade, .opts, .orient { padding-right: 8px; }
.opts { padding-top: 2px; margin-bottom: 2px; height: 154px; }
.opts label { height: 17px; padding-left: 1px; }
.orient { display: flex; align-items: center; justify-content: space-between; height: 67px; padding-top: 4px; }
.orient label { height: 16px; padding-left: 1px; }
.orient label:last-child { height: 19px; }
.orient svg { width: 22px; height: 27px; margin: 0 2px 4px; }
.dfoot { display: flex; align-items: center; gap: 6px; padding: 6px 30px 9px 7px; }
.prev { margin-right: auto; }
.apply { width: 100px; }
.ok { border: 2px solid #2b7bd4; }
.less svg { display: block; width: 17px; height: 17px; }

/* screen recorder and caption */
.recorder { position: absolute; right: 1px; bottom: 1px; z-index: 3; display: flex; align-items: center; justify-content: space-between; width: 201px; height: 44px; padding: 0 20px 0 16px; background: #fff; border-radius: 2px; color: #444; font-size: 12px; }
.recorder em { color: #aaa; }
.recorder button { width: 67px; height: 26px; border-radius: 4px; background: #ff6f20; color: #ffe6d6; font-size: 12px; }
.caption { position: absolute; z-index: 5; left: 0; right: 0; top: 590px; text-align: center; font: 500 36px/60px "Noto Sans CJK SC", sans-serif; white-space: nowrap; color: #fff; -webkit-text-stroke: 5px #000; paint-order: stroke fill; }
.caption strong { font-size: 48px; font-weight: 500; color: #fdb913; }
```
